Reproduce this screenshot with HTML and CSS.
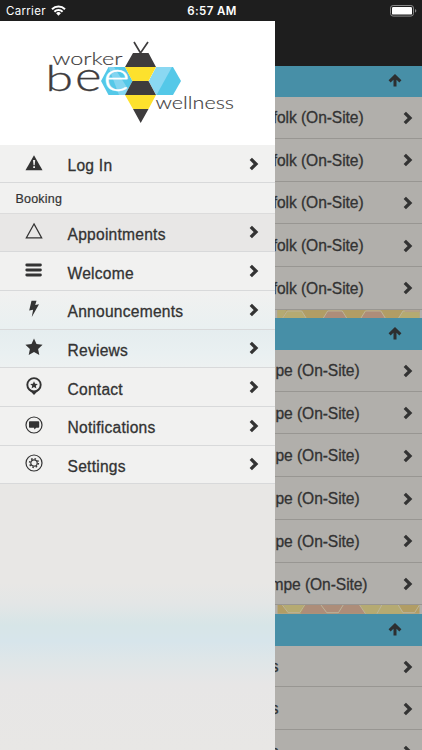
FILE: index.html
```html
<!DOCTYPE html>
<html lang="en">
<head>
<meta charset="utf-8">
<title>Worker Bee Wellness</title>
<link rel="stylesheet" href="styles.css">
</head>
<body>
<svg width="0" height="0" class="defs">
  <symbol id="chev" viewBox="0 0 10 14"><path d="M1.800 1.800L7 7l-5.200 5.200" fill="none" stroke="currentColor" stroke-width="3.300"/></symbol>
  <symbol id="up" viewBox="0 0 14 14"><path d="M7 12.600V3M1.600 7.400L7 2.200l5.400 5.200" fill="none" stroke="currentColor" stroke-width="3"/></symbol>
</svg>
<div class="screen">
  <header class="status">
    <span class="carrier">Carrier</span>
    <svg class="wifi" width="15" height="11" viewBox="0 0 15 11"><g fill="none" stroke="#fff" stroke-width="2"><path d="M1 4.200a9.200 9.200 0 0 1 13 0"/><path d="M3.400 6.700a5.800 5.800 0 0 1 8.200 0"/></g><path d="M5.100 8.300a3.400 3.400 0 0 1 4.800 0L7.500 10.800z" fill="#fff"/></svg>
    <span class="time">6:57 AM</span>
    <svg class="battery" width="27" height="12" viewBox="0 0 27 12"><rect x=".5" y=".5" width="23" height="10.600" rx="2.600" fill="none" stroke="#888"/><rect x="2" y="2" width="20" height="7.600" rx="1.200" fill="#fff"/><path d="M25 4v3.600q1.300-.4 1.300-1.800T25 4z" fill="#888"/></svg>
  </header>
  <div class="body">
    <nav class="menu">
      <div class="logo">
        <svg width="275" height="124" viewBox="0 21 275 124">
          <path d="M108.500 67H125l7.500 14-7.500 14h-16.500L101 81z" fill="#54c8e8"/>
          <path d="M108.500 67H114l14 22-3 6h-6z" fill="#83d5f0"/>
          <path d="M156.500 67H173l8 14-8 14h-16.500l-7.500-14z" fill="#54c8e8"/>
          <path d="M156.500 67H172l-15.500 28-7.500-14z" fill="#8ad8f2"/>
          <path d="M133 53h15.500l7.500 14h-31z M132.500 81h16l7.500 14h-31z M133 109h15.500l-7.800 14z" fill="#3e3c3d"/>
          <path d="M125 67h31l-7.500 14h-16z M125 95h31l-7.500 14H133z" fill="#fde12d"/>
          <path d="M134 42l6.500 11L148 42" fill="none" stroke="#3e3c3d" stroke-width="1.700"/>
          <text class="thin" x="52.500" y="65" font-size="17" textLength="70" lengthAdjust="spacingAndGlyphs">worker</text>
          <text class="bee" x="45.500" y="91.300" font-size="36" textLength="27.500" lengthAdjust="spacingAndGlyphs">b</text>
          <text class="bee" x="75" y="91.300" font-size="41" textLength="26.500" lengthAdjust="spacingAndGlyphs">e</text>
          <text class="bee white" x="103.200" y="91.300" font-size="41" textLength="26.500" lengthAdjust="spacingAndGlyphs">e</text>
          <text class="thin" x="155.500" y="108.800" font-size="18.500" textLength="78.500" lengthAdjust="spacingAndGlyphs">wellness</text>
        </svg>
      </div>
      <a class="item login"><svg class="ico" viewBox="0 0 18 18"><path d="M9 1.200L17.500 16.200H.5z" fill="#333"/><path d="M8 6h2.200l-.5 5.200H8.500zM8.200 12.200h1.800v1.800H8.200z" fill="#eee"/></svg><span>Log In</span><svg class="chev"><use href="#chev"/></svg></a>
      <div class="group">Booking</div>
      <a class="item active"><svg class="ico" viewBox="0 0 18 18"><path d="M9 1.900L16.700 15.900H1.300z" fill="none" stroke="#333" stroke-width="1.200"/></svg><span>Appointments</span><svg class="chev"><use href="#chev"/></svg></a>
      <a class="item"><svg class="ico" viewBox="0 0 18 18"><path d="M1.800 4h13.600M1.800 9h13.600M1.800 14h13.600" stroke="#333" stroke-width="2.900" stroke-linecap="round"/></svg><span>Welcome</span><svg class="chev"><use href="#chev"/></svg></a>
      <a class="item"><svg class="ico" viewBox="0 0 18 18"><path d="M6.500.8h5L10.200 5l3.800-.8L6.800 17l1.300-7.300-3.900.9z" fill="#333"/></svg><span>Announcements</span><svg class="chev"><use href="#chev"/></svg></a>
      <a class="item"><svg class="ico" viewBox="0 0 18 18"><path d="M9 .6l2.500 5.500 6.100.7-4.500 4.100 1.200 6.200L9 14l-5.300 3.100 1.200-6.200L.4 6.800l6.100-.7z" fill="#333"/></svg><span>Reviews</span><svg class="chev"><use href="#chev"/></svg></a>
      <a class="item"><svg class="ico" viewBox="0 0 18 18"><path d="M3.800 12.500L9 18l5.200-5.500z" fill="#333"/><circle cx="9" cy="7.800" r="6.700" fill="#f1f1f1" stroke="#333" stroke-width="1.900"/><path d="M9 4.200l1.100 2.500 2.700.3-2 1.800.6 2.700L9 10.100l-2.400 1.400.6-2.700-2-1.800 2.700-.3z" fill="#333"/></svg><span>Contact</span><svg class="chev"><use href="#chev"/></svg></a>
      <a class="item"><svg class="ico" viewBox="0 0 18 18"><circle cx="9" cy="9" r="8" fill="none" stroke="#333" stroke-width="1.200"/><path d="M4.800 5.200h8.600q.8 0 .8.800v5q0 .8-.8.800h-2.200l-1.700 1.700-.5-1.700H4.800q-.8 0-.8-.8V6q0-.8.8-.8z" fill="#333"/></svg><span>Notifications</span><svg class="chev"><use href="#chev"/></svg></a>
      <a class="item"><svg class="ico" viewBox="0 0 18 18"><g fill="none" stroke="#333"><circle cx="9" cy="9" r="8" stroke-width="1.200"/><circle cx="9" cy="9" r="3.200" stroke-width="1.200"/><circle cx="9" cy="9" r="4.400" stroke-width="1.500" stroke-dasharray="1.500 1.956"/></g></svg><span>Settings</span><svg class="chev"><use href="#chev"/></svg></a>
    </nav>
    <main class="page">
      <div class="navbar"></div>
      <div class="head"><svg class="up"><use href="#up"/></svg></div>
      <div class="row first"><span>folk (On-Site)</span><svg class="chev"><use href="#chev"/></svg></div>
      <div class="row"><span>folk (On-Site)</span><svg class="chev"><use href="#chev"/></svg></div>
      <div class="row"><span>folk (On-Site)</span><svg class="chev"><use href="#chev"/></svg></div>
      <div class="row"><span>folk (On-Site)</span><svg class="chev"><use href="#chev"/></svg></div>
      <div class="row"><span>folk (On-Site)</span><svg class="chev"><use href="#chev"/></svg></div>
      <svg class="comb" width="147" height="9" viewBox="0 0 147 9"><rect width="147" height="9" fill="#b19d65"/><path d="M0 0h9L5 9H0zM10 1h15l5 8H6zM130 1h17v8h-22z" fill="#b5aa72"/><path d="M52 1h15l5 8H47zM92 1h15l5 8H86z" fill="#ad8d79"/><path d="M132 0h15v2h-15z" fill="#ad8d79"/><path d="M5 9l5-8h15l5 8M47 9l5-8h15l5 8M86 9l5-8h16l5 8M125 9l5-8h17" fill="none" stroke="#bdb59c"/></svg>
      <div class="head"><svg class="up"><use href="#up"/></svg></div>
      <div class="row first"><span class="pe">pe (On-Site)</span><svg class="chev"><use href="#chev"/></svg></div>
      <div class="row"><span class="pe">pe (On-Site)</span><svg class="chev"><use href="#chev"/></svg></div>
      <div class="row"><span class="pe">pe (On-Site)</span><svg class="chev"><use href="#chev"/></svg></div>
      <div class="row"><span class="pe">pe (On-Site)</span><svg class="chev"><use href="#chev"/></svg></div>
      <div class="row"><span class="pe">pe (On-Site)</span><svg class="chev"><use href="#chev"/></svg></div>
      <div class="row"><span class="mpe">mpe (On-Site)</span><svg class="chev"><use href="#chev"/></svg></div>
      <svg class="comb" width="147" height="9" viewBox="0 0 147 9"><rect width="147" height="9" fill="#b19d65"/><path d="M6 0h21l-4 8H11zM85 0h41l5 9H91z" fill="#b5aa72"/><path d="M29 0h56l6 9H24z" fill="#ad8d79"/><path d="M5 0l6 8h12l5-8M45 0l6 8h12l5-8M85 0l6 9M103 9l5-9M125 0l5 8h12l5-8" fill="none" stroke="#bdb59c"/></svg>
      <div class="head"><svg class="up"><use href="#up"/></svg></div>
      <div class="row first"><span class="s">s</span><svg class="chev"><use href="#chev"/></svg></div>
      <div class="row"><span class="s">s</span><svg class="chev"><use href="#chev"/></svg></div>
      <div class="row"><span class="s">s</span><svg class="chev"><use href="#chev"/></svg></div>
    </main>
  </div>
</div>
</body>
</html>
```
FILE: styles.css
```css
* { box-sizing: border-box; }
body { margin: 0; font-family: "Liberation Sans", Arial, sans-serif; color: #333; }
.defs { display: block; }
.screen { width: 422px; height: 750px; overflow: hidden; background: #1e1e1e; }
.status { height: 21px; display: grid; grid-template-columns: 39px 1fr auto 1fr 39px; align-items: center; padding: 0 6px; color: #fff; font-family: Inter, sans-serif; font-size: 11.5px; }
.carrier { letter-spacing: .3px; white-space: nowrap; }
.wifi { margin-left: 6px; }
.time { font-weight: 600; letter-spacing: .42px; margin-left: 2px; }
.battery { grid-column: 5; justify-self: end; margin-right: -1px; }
.body { display: flex; height: 729px; }
.menu { width: 275px; flex: none; background: linear-gradient(#e8e7e5 0, #e8e7e5 562px, #e3e6e6 583px, #d7e5e7 604px, #d7e5eb 620px, #dfe6e8 640px, #e7e6e6 664px, #e8e7e5 729px); }
.logo { height: 124px; background: #fff; }
.logo svg { display: block; }
.thin { font-family: Lato, sans-serif; font-weight: 300; fill: #3e3c3d; stroke: #3e3c3d; stroke-width: .15px; }
.bee { font-family: Lato, sans-serif; font-weight: 300; fill: #3e3c3d; stroke: #3e3c3d; stroke-width: .3px; }
.white { fill: #fff; stroke: #fff; }
.item { height: 38.7px; display: flex; align-items: center; padding: 2px 16px 0 25px; background: #f1f1f0; border-bottom: 1px solid #d8d9da; font-size: 15.6px; letter-spacing: .24px; -webkit-text-stroke: .3px #333; }
.item span { flex: 1; padding-left: 24.5px; padding-top: 3.4px; }
.item .ico { width: 18px; height: 18px; margin-top: -4px; }
.item .chev { margin-top: -2px; }
.item.login { height: 38px; }
.item.login span { padding-top: 2px; }
.item.active { background: #e8e7e6; }
.item:nth-of-type(4) { background: linear-gradient(#f1f1f0, #e9f0f1); }
.item:nth-of-type(5) { background: linear-gradient(#e5edef, #e9f0f1 60%, #edf1f1); }
.group { height: 30.5px; line-height: 33px; padding-left: 15.5px; background: #f1f1f0; border-bottom: 1px solid #dcdcdc; font-size: 12.5px; letter-spacing: .2px; -webkit-text-stroke: .2px #333; }
.chev { width: 10px; height: 14px; color: #333; flex: none; }
.page { width: 147px; flex: none; overflow: hidden; background: #b1afab; }
.navbar { height: 44.5px; background: #1e1e1e; }
.head { height: 31.5px; background: #478fa7; display: flex; align-items: center; justify-content: flex-end; padding-right: 20px; }
.up { width: 14px; height: 14px; color: #2d2f30; }
.row { height: 42.75px; display: flex; align-items: center; justify-content: flex-end; padding: 1px 9.5px 0 0; border-bottom: 1px solid #989692; font-size: 15.6px; letter-spacing: -.08px; white-space: nowrap; -webkit-text-stroke: .3px #333; }
.row.first { height: 41.75px; }
.row span { margin-right: 39px; padding-top: 1px; }
.row .pe { margin-right: 43px; }
.row .mpe { margin-right: 35px; }
.row .s { margin-right: 124px; }
.comb { display: block; height: 8.7px; }
```
